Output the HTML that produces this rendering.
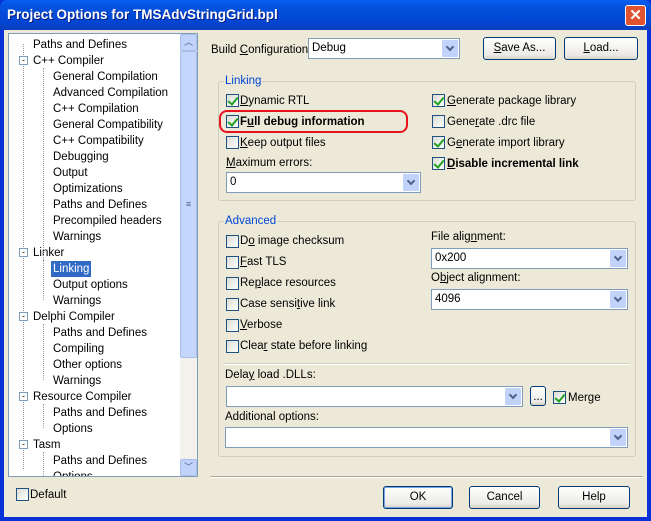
<!DOCTYPE html><html><head><style>
*{margin:0;padding:0;box-sizing:border-box}
body{width:651px;height:521px;overflow:hidden;background:#0831d9;font-family:"Liberation Sans",Arial,sans-serif;font-size:11.5px;color:#000;position:relative}
.a{position:absolute;white-space:nowrap}
#title{left:0;top:0;width:651px;height:30px;background:linear-gradient(#0a5ef0,#0553e0 20%,#0346d4 70%,#0a3fbd);border-radius:7px 7px 0 0}
#tt{left:7px;top:7px;color:#fff;font-weight:bold;font-size:13.5px;text-shadow:1px 1px #0a1e7a}
#close{left:625px;top:5px;width:21px;height:21px;background:#e0532e;border:1px solid #fff;border-radius:3px;color:#fff;font-weight:bold;font-size:15px;text-align:center;line-height:19px}
#body{left:4px;top:30px;width:643px;height:487px;background:#ece9d8}
#tree{left:8px;top:33px;width:190px;height:444px;background:#fff;border:1px solid #7f9db9;overflow:hidden}
#sb{left:180px;top:34px;width:17px;height:442px;background:#f3f1ec}
.sbb{position:absolute;left:0;width:17px;height:17px;background:#c1d3fb;border:1px solid #a9bee8;border-radius:2px;text-align:center;color:#4d6185;font-size:9px;line-height:15px}
.ti{position:absolute;height:16px;line-height:16px}
.cb{position:absolute;width:13px;height:13px;border:1px solid #1c5180;background:linear-gradient(135deg,#dcdcd4,#fff)}
.cb.on::after{content:"";position:absolute;left:3px;top:0px;width:4px;height:8px;border:solid #21a121;border-width:0 2px 2px 0;transform:rotate(40deg)}
.lb{position:absolute;line-height:14px}
.combo{position:absolute;background:#fff;border:1px solid #7f9db9;height:21px;padding-left:3px;line-height:19px}
.combo::after{content:"";position:absolute;right:1px;top:1px;width:16px;height:17px;background:#c1d3fb;border-radius:1px}
.combo::before{content:"";position:absolute;right:6px;top:5px;width:4px;height:4px;border:solid #4d6185;border-width:0 2px 2px 0;transform:rotate(45deg);z-index:2}
.btn{position:absolute;border:1px solid #003c74;border-radius:3px;background:linear-gradient(#fff,#ecebe6 80%,#d6d0c5);text-align:center}
.grp{position:absolute;border:1px solid #d0d0bf;border-radius:3px}
.gl{position:absolute;background:#ece9d8;color:#0046d5;padding:0 1px;line-height:13px}
u{text-decoration:underline}
</style></head><body>
<div class="a" id="title"></div>
<div class="a" id="tt">Project Options for TMSAdvStringGrid.bpl</div>
<div class="a" id="close">✕</div>
<div class="a" id="body"></div>

<div class="a" id="tree">
<div style="position:absolute;left:0;top:2px">
<div class="ti" style="left:24px;top:1px">Paths and Defines</div>
<div class="ti" style="left:24px;top:17px">C++ Compiler</div>
<div class="ti" style="left:44px;top:33px">General Compilation</div>
<div class="ti" style="left:44px;top:49px">Advanced Compilation</div>
<div class="ti" style="left:44px;top:65px">C++ Compilation</div>
<div class="ti" style="left:44px;top:81px">General Compatibility</div>
<div class="ti" style="left:44px;top:97px">C++ Compatibility</div>
<div class="ti" style="left:44px;top:113px">Debugging</div>
<div class="ti" style="left:44px;top:129px">Output</div>
<div class="ti" style="left:44px;top:145px">Optimizations</div>
<div class="ti" style="left:44px;top:161px">Paths and Defines</div>
<div class="ti" style="left:44px;top:177px">Precompiled headers</div>
<div class="ti" style="left:44px;top:193px">Warnings</div>
<div class="ti" style="left:24px;top:209px">Linker</div>
<div class="ti" style="left:42px;top:225px;background:#316ac5;color:#fff;padding:0 2px">Linking</div>
<div class="ti" style="left:44px;top:241px">Output options</div>
<div class="ti" style="left:44px;top:257px">Warnings</div>
<div class="ti" style="left:24px;top:273px">Delphi Compiler</div>
<div class="ti" style="left:44px;top:289px">Paths and Defines</div>
<div class="ti" style="left:44px;top:305px">Compiling</div>
<div class="ti" style="left:44px;top:321px">Other options</div>
<div class="ti" style="left:44px;top:337px">Warnings</div>
<div class="ti" style="left:24px;top:353px">Resource Compiler</div>
<div class="ti" style="left:44px;top:369px">Paths and Defines</div>
<div class="ti" style="left:44px;top:385px">Options</div>
<div class="ti" style="left:24px;top:401px">Tasm</div>
<div class="ti" style="left:44px;top:417px">Paths and Defines</div>
<div class="ti" style="left:44px;top:433px">Options</div>
</div>
<div style="position:absolute;left:14px;top:10px;height:425px;border-left:1px dotted #999"></div>
<div style="position:absolute;left:34px;top:34px;height:194px;border-left:1px dotted #999"></div>
<div style="position:absolute;left:34px;top:226px;height:40px;border-left:1px dotted #999"></div>
<div style="position:absolute;left:34px;top:290px;height:56px;border-left:1px dotted #999"></div>
<div style="position:absolute;left:34px;top:370px;height:24px;border-left:1px dotted #999"></div>
<div style="position:absolute;left:34px;top:418px;height:30px;border-left:1px dotted #999"></div>
<div style="position:absolute;left:10px;top:22px;width:9px;height:9px;border:1px solid #7f9db9;background:#fff;font-size:9px;line-height:6px;text-align:center">-</div>
<div style="position:absolute;left:10px;top:214px;width:9px;height:9px;border:1px solid #7f9db9;background:#fff;font-size:9px;line-height:6px;text-align:center">-</div>
<div style="position:absolute;left:10px;top:278px;width:9px;height:9px;border:1px solid #7f9db9;background:#fff;font-size:9px;line-height:6px;text-align:center">-</div>
<div style="position:absolute;left:10px;top:358px;width:9px;height:9px;border:1px solid #7f9db9;background:#fff;font-size:9px;line-height:6px;text-align:center">-</div>
<div style="position:absolute;left:10px;top:406px;width:9px;height:9px;border:1px solid #7f9db9;background:#fff;font-size:9px;line-height:6px;text-align:center">-</div>
</div>
<div class="a" id="sb">
<div class="sbb" style="top:0">︿</div>
<div class="sbb" style="top:17px;height:307px;background:#c4d6fc;line-height:305px">≡</div>
<div class="sbb" style="top:425px">﹀</div>
</div>
<div class="cb" style="left:16px;top:488px"></div>
<div class="lb" style="left:30px;top:488px">Default</div>

<div class="lb" style="left:211px;top:43px">Build <u>C</u>onfiguration:</div>
<div class="combo" style="left:308px;top:38px;width:152px">Debug</div>
<div class="btn" style="left:483px;top:37px;width:73px;height:23px;line-height:21px"><u>S</u>ave As...</div>
<div class="btn" style="left:564px;top:37px;width:74px;height:23px;line-height:21px"><u>L</u>oad...</div>

<div class="grp" style="left:218px;top:81px;width:418px;height:120px"></div>
<div class="gl" style="left:224px;top:75px">Linking</div>
<div class="cb on" style="left:226px;top:94px"></div><div class="lb" style="left:240px;top:94px"><u>D</u>ynamic RTL</div>
<div class="cb on" style="left:226px;top:115px"></div><div class="lb" style="left:240px;top:115px;font-weight:bold">F<u>u</u>ll debug information</div>
<div style="position:absolute;left:219px;top:110px;width:189px;height:23px;border:2px solid #e8121f;border-radius:8px"></div>
<div class="cb" style="left:226px;top:136px"></div><div class="lb" style="left:240px;top:136px"><u>K</u>eep output files</div>
<div class="lb" style="left:226px;top:156px"><u>M</u>aximum errors:</div>
<div class="combo" style="left:226px;top:172px;width:195px">0</div>
<div class="cb on" style="left:432px;top:94px"></div><div class="lb" style="left:447px;top:94px"><u>G</u>enerate package library</div>
<div class="cb" style="left:432px;top:115px"></div><div class="lb" style="left:447px;top:115px">Gene<u>r</u>ate .drc file</div>
<div class="cb on" style="left:432px;top:136px"></div><div class="lb" style="left:447px;top:136px">G<u>e</u>nerate import library</div>
<div class="cb on" style="left:432px;top:157px"></div><div class="lb" style="left:447px;top:157px;font-weight:bold"><u>D</u>isable incremental link</div>

<div class="grp" style="left:218px;top:221px;width:418px;height:236px"></div>
<div class="gl" style="left:224px;top:215px">Advanced</div>
<div class="cb" style="left:226px;top:235px"></div><div class="lb" style="left:240px;top:234px">D<u>o</u> image checksum</div>
<div class="cb" style="left:226px;top:256px"></div><div class="lb" style="left:240px;top:255px"><u>F</u>ast TLS</div>
<div class="cb" style="left:226px;top:277px"></div><div class="lb" style="left:240px;top:276px">Re<u>p</u>lace resources</div>
<div class="cb" style="left:226px;top:298px"></div><div class="lb" style="left:240px;top:297px">Case sensi<u>t</u>ive link</div>
<div class="cb" style="left:226px;top:319px"></div><div class="lb" style="left:240px;top:318px"><u>V</u>erbose</div>
<div class="cb" style="left:226px;top:340px"></div><div class="lb" style="left:240px;top:339px">Clea<u>r</u> state before linking</div>
<div class="lb" style="left:431px;top:230px">File alig<u>n</u>ment:</div>
<div class="combo" style="left:431px;top:248px;width:197px">0x200</div>
<div class="lb" style="left:431px;top:271px">O<u>b</u>ject alignment:</div>
<div class="combo" style="left:431px;top:289px;width:197px">4096</div>
<div style="position:absolute;left:223px;top:363px;width:407px;border-top:1px solid #d0d0bf;border-bottom:1px solid #fff"></div>
<div class="lb" style="left:225px;top:368px">Dela<u>y</u> load .DLLs:</div>
<div class="combo" style="left:226px;top:386px;width:297px"></div>
<div class="btn" style="left:530px;top:386px;width:16px;height:20px;line-height:20px">...</div>
<div class="cb on" style="left:553px;top:391px"></div><div class="lb" style="left:568px;top:391px">Merge</div>
<div class="lb" style="left:225px;top:410px">Additional options:</div>
<div class="combo" style="left:225px;top:427px;width:403px"></div>

<div style="position:absolute;left:210px;top:476px;width:433px;border-top:1px solid #aca899;border-bottom:1px solid #fff"></div>
<div class="btn" style="left:383px;top:486px;width:70px;height:23px;line-height:21px;border-color:#003c74;box-shadow:inset 0 0 0 1px #7ba2e7">OK</div>
<div class="btn" style="left:469px;top:486px;width:71px;height:23px;line-height:21px">Cancel</div>
<div class="btn" style="left:558px;top:486px;width:72px;height:23px;line-height:21px">Help</div>
</body></html>
